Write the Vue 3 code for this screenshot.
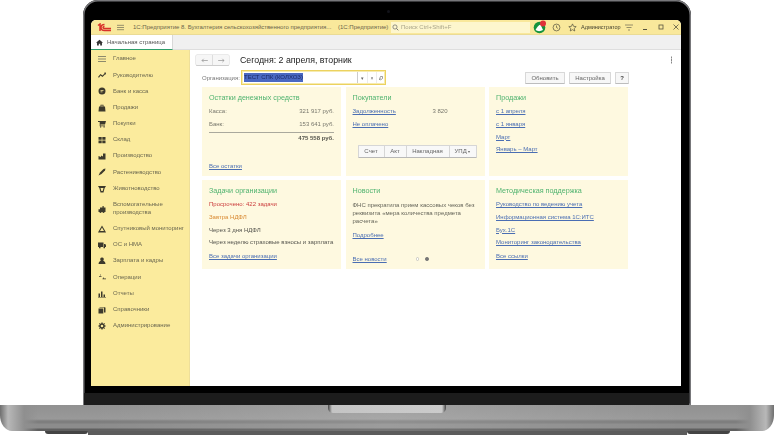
<template>
  <div class="page">
    <div class="lid">
      <div class="cam"></div>
      <div class="screen">
        <header class="titlebar">
          <svg class="logo" viewBox="0 0 14 9">
            <path d="M1 2.500 3 1v7M7.500 1.500C5 1.500 4 3 4 4.500S5 7.500 7.500 7.500H14M7.500 3.500C6.500 3.500 6 4 6 4.600S6.500 5.600 7.500 5.600H14" fill="none" stroke="#d8322a" stroke-width="1.500"/>
          </svg>
          <svg class="menu" viewBox="0 0 8 7"><path d="M0 1h8M0 3.500h8M0 6h8" stroke="#6d6a55" stroke-width=".8"/></svg>
          <span class="apptitle">1С:Предприятие 8. Бухгалтерия сельскохозяйственного предприятия...</span>
          <span class="appmode">(1С:Предприятие)</span>
          <div class="search">
            <svg viewBox="0 0 8 8"><circle cx="3.400" cy="3.400" r="2.400" fill="none" stroke="#666" stroke-width=".8"/><path d="m5.200 5.200 2 2" stroke="#666"/></svg>
            <span>Поиск Ctrl+Shift+F</span>
          </div>
          <div class="notify">
            <svg viewBox="0 0 14 14">
              <circle cx="6.500" cy="7.500" r="5.800" fill="#14933c"/>
              <path d="M2.500 10C4 7 5.500 5.500 7.500 4.500L10 10C7.500 11.500 4.500 11.500 2.500 10z" fill="#fff"/>
              <circle cx="10" cy="3.500" r="3" fill="#e0313a"/>
            </svg>
          </div>
          <svg class="tool" viewBox="0 0 10 10"><circle cx="5" cy="5" r="3.800" fill="none" stroke="#57543f" stroke-width=".8"/><path d="M5 2.800V5l1.600 1" fill="none" stroke="#57543f" stroke-width=".8"/></svg>
          <svg class="tool" viewBox="0 0 10 10"><path d="m5 1 1.200 2.700 2.900.3-2.200 2 .6 2.900L5 7.400 2.500 8.900l.6-2.900-2.200-2 2.900-.3z" fill="none" stroke="#57543f" stroke-width=".8"/></svg>
          <span class="user">Администратор</span>
          <svg class="filter" viewBox="0 0 8 7"><path d="M0 1h8M1.500 3.500h5M3 6h2" stroke="#8a8462" stroke-width=".9"/></svg>
          <svg class="winbtn" viewBox="0 0 8 8"><path d="M2 6.500h4" stroke="#57543f"/></svg>
          <svg class="winbtn" viewBox="0 0 8 8"><rect x="2" y="2" width="4" height="4" fill="none" stroke="#57543f" stroke-width=".8"/></svg>
          <svg class="winbtn" viewBox="0 0 8 8"><path d="m1.500 1.500 5 5m0-5-5 5" stroke="#57543f" stroke-width=".8"/></svg>
        </header>

        <div class="tabs">
          <div class="tab">
            <svg viewBox="0 0 8 8"><path d="M4 .8 0 4.300h1.200V7.500h2V5.300h1.600v2.200h2V4.300H8z" fill="#333"/></svg>
            <span>Начальная страница</span>
          </div>
        </div>

        <div class="body">
          <aside class="sidebar">
            <div v-for="item in menu" :key="item.name" class="menu-item" :class="{ tall: item.tall }">
              <svg viewBox="0 0 8 8"><path :d="item.icon" :fill="item.fill || '#3d3a2c'" fill-rule="evenodd"/></svg>
              <span>{{ item.name }}</span>
            </div>
          </aside>

          <main class="content">
            <div class="headrow">
              <div class="navbtns">
                <button class="nav"><svg viewBox="0 0 8 6"><path d="M8 3H1m2-2L1 3l2 2" fill="none" stroke="#8d8d8d" stroke-width=".8"/></svg></button>
                <button class="nav"><svg viewBox="0 0 8 6"><path d="M0 3h7M5 1l2 2-2 2" fill="none" stroke="#8d8d8d" stroke-width=".8"/></svg></button>
              </div>
              <h1>Сегодня: 2 апреля, вторник</h1>
              <span class="kebab"></span>
            </div>

            <div class="orgrow">
              <label>Организация:</label>
              <div class="orgfield">
                <span class="sel">ТЕСТ СПК (КОЛХОЗ)</span>
                <i class="cell">▾</i><i class="cell">×</i>
                <i class="cell">
                  <svg viewBox="0 0 6 6"><path d="M1 5 2.500 3.500M2.500 1.500h2v2l-2 1.500-1-1z" fill="none" stroke="#777" stroke-width=".7"/></svg>
                </i>
              </div>
              <button class="btn upd">Обновить</button>
              <button class="btn cfg">Настройка</button>
              <button class="btn help">?</button>
            </div>

            <div class="cards">
              <section class="card">
                <h2>Остатки денежных средств</h2>
                <div class="money"><span>Касса:</span><span>321 917 руб.</span></div>
                <div class="money"><span>Банк:</span><span>153 641 руб.</span></div>
                <div class="total">475 558 руб.</div>
                <a class="bottom">Все остатки</a>
              </section>

              <section class="card">
                <h2>Покупатели</h2>
                <div class="debt"><a>Задолженность</a><span>3 820</span></div>
                <a>Не оплачено</a>
                <div class="docs">
                  <button class="w1">Счет</button>
                  <button class="w2">Акт</button>
                  <button class="w3">Накладная</button>
                  <button class="w4">УПД <small>▾</small></button>
                </div>
              </section>

              <section class="card">
                <h2>Продажи</h2>
                <a>с 1 апреля</a>
                <a>с 1 января</a>
                <a>Март</a>
                <a>Январь – Март</a>
              </section>

              <section class="card">
                <h2>Задачи организации</h2>
                <p class="red">Просрочено: 422 задачи</p>
                <p class="orange">Завтра НДФЛ</p>
                <p>Через 3 дня НДФЛ</p>
                <p>Через неделю страховые взносы и зарплата</p>
                <a class="bottom raised">Все задачи организации</a>
              </section>

              <section class="card">
                <h2>Новости</h2>
                <p class="news">ФНС прекратила прием кассовых чеков без реквизита «мера количества предмета расчета»</p>
                <a>Подробнее</a>
                <div class="newsfoot">
                  <a>Все новости</a>
                  <span class="dot"></span>
                  <span class="dot on"></span>
                </div>
              </section>

              <section class="card">
                <h2>Методическая поддержка</h2>
                <a>Руководство по ведению учета</a>
                <a>Информационная система 1С:ИТС</a>
                <a>Бух.1С</a>
                <a>Мониторинг законодательства</a>
                <a class="bottom raised">Все ссылки</a>
              </section>
            </div>
          </main>
        </div>
      </div>
      <div class="chin"></div>
    </div>
    <div class="base"><div class="notch"></div></div>
    <div class="feet"><span></span><i></i><span></span></div>
  </div>
</template>

<script setup>
const menu = [
  { name: 'Главное', fill: '#8d8a6c', icon: 'M0 1h8v1H0zM0 3.500h8v1H0zM0 6h8v1H0z' },
  { name: 'Руководителю', icon: 'M0 6l2.500-3 2 1.500L6.500 2.500 6 1.800 8 1.500 7.800 3.800 7.200 3.200 4.500 6l-2-1.500L1 6.800z' },
  { name: 'Банк и касса', icon: 'M4 .5a3.500 3.500 0 1 0 0 7 3.500 3.500 0 0 0 0-7zM2.500 3h3v.8h-3zM2.500 4.500h2v.8h-2z' },
  { name: 'Продажи', icon: 'M1 2.500h6l.5 5h-7zM2.500 2.500V.8h3v1.700h-.8V1.600H3.300v.9z' },
  { name: 'Покупки', icon: 'M0 1h8l-1 3.500H2.500V5.500H7v.8H1.700V2H0zM2 6.600h1.200v1H2zM5.500 6.600h1.200v1H5.500z' },
  { name: 'Склад', icon: 'M.5 1h3.200v2.800H.5zM4.300 1h3.200v2.800H4.300zM.5 4.400h3.200v2.800H.5zM4.300 4.400h3.200v2.800H4.300z' },
  { name: 'Производство', icon: 'M.5 7.500V4l2.500 1V3.500l2 1V1.500h2.500v6z' },
  { name: 'Растениеводство', icon: 'M.5 7.500 2 4.500 5.500 1 7.500.5 7 2.500 3.500 6z' },
  { name: 'Животноводство', icon: 'M0 1h8L6.500 3.500 5.500 7.500h-3L1.500 3.500zM2.500 3l.8 3h1.400l.8-3z' },
  { name: 'Вспомогательные производства', tall: true, icon: 'M.5 7V4.200h1.500V2.500h2.500V1h1.200v1.500H7.500V7h-1a1 1 0 0 1-2 0h-1a1 1 0 0 1-2 0z' },
  { name: 'Спутниковый мониторинг', icon: 'M4 .5 7.500 6.500 8 7.500H0L.5 6.500zM4 2.500 2 6h4z' },
  { name: 'ОС и НМА', icon: 'M0 1.500h5.500v4.500H0zM6 3h1.300L8 4.300V6H6zM1 6h1.500v1.300H1zM5.500 6H7v1.300H5.500z' },
  { name: 'Зарплата и кадры', icon: 'M4 .5a1.700 1.700 0 0 1 1.200 3l1.800 1.500.5 2H.5l.5-2 1.800-1.500A1.700 1.700 0 0 1 4 .5z' },
  { name: 'Операции', icon: 'M1 3h2.500v.7H1zM2 1.500h.7v1H2zM4.500 5.500H8v.7H4.500zM5 4.500h.7v.9H5z' },
  { name: 'Отчеты', icon: 'M.5 3.500h1.500v3.500H.5zM3 1.500h1.500V7H3zM5.500 4.500H7V7H5.500zM0 7.200h8v.5H0z' },
  { name: 'Справочники', icon: 'M.5 2.500h4.800v5H.5zM6 1.500h1.500v5H6zM1.500 1h5v.5h-5z' },
  { name: 'Администрирование', icon: 'M3.400.4H4.600L4.800 1.400 5.600 1.700 6.500 1.100 6.900 1.500 6.300 2.400 6.600 3.200 7.600 3.400V4.600L6.600 4.800 6.300 5.600 6.900 6.500 6.500 6.900 5.600 6.300 4.800 6.600 4.600 7.600H3.400L3.200 6.600 2.400 6.300 1.500 6.900 1.100 6.500 1.700 5.600 1.400 4.800 .4 4.600V3.400L1.400 3.200 1.700 2.400 1.100 1.500 1.500 1.100 2.400 1.700 3.200 1.400zM4 2.700a1.300 1.300 0 1 0 0 2.600 1.300 1.300 0 0 0 0-2.600z' }
]
</script>

<style>
html, body {
  margin: 0;
  background: #fff;
  overflow: hidden;
}
</style>

<style scoped>
.page {
  width: 774px;
  height: 435px;
  overflow: hidden;
  font-family: "Liberation Sans", Arial, sans-serif;
  color: #55554e;
}

.lid {
  box-sizing: border-box;
  width: 608px;
  height: 405px;
  margin-left: 83px;
  padding: 20px 10px 0 8px;
  background: #000;
  border-radius: 15px 15px 0 0;
  box-shadow: inset 0 0 0 1.500px #77777a;
  position: relative;
}

.cam {
  position: absolute;
  top: 10px;
  left: 304px;
  width: 3px;
  height: 3px;
  border-radius: 50%;
  background: #12131a;
}

.screen {
  height: 366px;
  display: flex;
  flex-direction: column;
  background: #fff;
  border-radius: 5px 5px 0 0;
  overflow: hidden;
  filter: blur(.4px);
}

.chin {
  height: 12px;
  margin: 7px -8px 0 -7px;
  background: #1c1c1c;
}

.titlebar {
  flex: none;
  height: 14px;
  display: flex;
  align-items: center;
  background: #f9e89b;
  border-bottom: 1px solid #eadb95;
  font-size: 6px;
  color: #6a664c;
}

.logo {
  width: 14px;
  height: 9px;
  margin-left: 6px;
}

.menu {
  width: 7px;
  height: 7px;
  margin-left: 6px;
}

.apptitle {
  margin-left: 9px;
  width: 198px;
  white-space: nowrap;
}

.appmode {
  margin-left: 7px;
  width: 50px;
  white-space: nowrap;
}

.search {
  box-sizing: border-box;
  display: flex;
  align-items: center;
  gap: 2px;
  width: 139px;
  height: 11px;
  margin-left: 3px;
  padding-left: 1px;
  background: #fdf6cd;
  color: #aaa58a;
  white-space: nowrap;
}

.search svg {
  width: 7px;
  height: 7px;
}

.notify svg {
  display: block;
  width: 14px;
  height: 14px;
  margin-left: 3px;
}

.tool {
  width: 9px;
  height: 9px;
  margin-left: 5px;
}

.tool + .tool {
  margin-left: 7px;
}

.user {
  margin-left: 4px;
  width: 39px;
  white-space: nowrap;
  font-size: 5.500px;
  color: #44422f;
}

.filter {
  width: 8px;
  height: 7px;
  margin-left: 5px;
}

.winbtn {
  width: 8px;
  height: 8px;
  margin-left: 8px;
}

.winbtn:last-child {
  margin-left: 7px;
}

.tabs {
  flex: none;
  height: 15px;
  background: #f0f0f0;
  border-bottom: 1px solid #dedede;
  box-sizing: border-box;
}

.tab {
  box-sizing: border-box;
  display: flex;
  align-items: center;
  gap: 4px;
  width: 82px;
  height: 15px;
  padding-left: 5px;
  background: #fff;
  border-right: 1px solid #d8d8d8;
  border-bottom: 1px solid #2f9e6a;
  font-size: 6px;
  color: #555;
  white-space: nowrap;
}

.tab svg {
  width: 7px;
  height: 7px;
}

.body {
  flex: 1;
  display: flex;
  min-height: 0;
}

.sidebar {
  box-sizing: border-box;
  flex: none;
  width: 99px;
  padding-top: 1px;
  background: #fbeb9d;
  border-right: 1px solid #eedf9a;
}

.menu-item {
  display: flex;
  align-items: center;
  height: 16.200px;
  padding-left: 7px;
  font-size: 6px;
  line-height: 7.500px;
  color: #6b6850;
}

.menu-item.tall {
  height: 24px;
}

.menu-item svg {
  flex: none;
  width: 8px;
  height: 8px;
  margin-right: 7px;
}

.content {
  flex: 1;
  min-width: 0;
  padding: 5px 0 0 6px;
}

.headrow {
  display: flex;
  align-items: center;
  height: 10px;
}

.navbtns {
  display: flex;
  flex: none;
  width: 33px;
  height: 10px;
  border-radius: 1px;
  box-shadow: 0 0 0 .5px #d5d5d5, 0 1px 0 #c4c4c4;
  background: #f6f6f6;
}

.nav {
  flex: 1;
  border: 0;
  padding: 0;
  background: none;
  display: flex;
  align-items: center;
  justify-content: center;
}

.nav + .nav {
  border-left: 1px solid #ddd;
}

.nav svg {
  width: 7px;
  height: 5px;
}

h1 {
  margin: 0 0 0 11px;
  font-size: 8.800px;
  font-weight: 400;
  color: #222;
  white-space: nowrap;
}

.kebab {
  width: 1.500px;
  height: 1.500px;
  margin-left: auto;
  margin-right: 9px;
  background: #888;
  box-shadow: 0 -2.500px 0 #888, 0 2.500px 0 #888;
}

.orgrow {
  display: flex;
  align-items: center;
  height: 15px;
  margin-top: 5px;
  margin-left: 6px;
  font-size: 6px;
  color: #777;
}

.orgrow label {
  width: 39px;
  white-space: nowrap;
}

.orgfield {
  box-sizing: border-box;
  display: flex;
  align-items: center;
  width: 145px;
  height: 15px;
  border: 1px solid #ecd25f;
  background: #fff;
  box-shadow: inset 0 0 0 1px #f6ebb0;
}

.sel {
  margin-left: 2px;
  max-width: 59px;
  height: 9px;
  line-height: 9px;
  background: #4a68c2;
  color: #1c2a66;
  white-space: nowrap;
}

.cell {
  flex: none;
  display: flex;
  align-items: center;
  justify-content: center;
  width: 9px;
  height: 11px;
  border-left: 1px solid #ececec;
  box-sizing: border-box;
  font-style: normal;
  font-size: 5px;
  color: #666;
}

.cell svg {
  width: 6px;
  height: 6px;
}

.cell:first-of-type {
  margin-left: auto;
  border-left-color: #ccc;
  width: 10px;
}

.btn {
  height: 12px;
  margin-left: 4px;
  padding: 0;
  border: 1px solid #d8d8d8;
  border-bottom-color: #bdbdbd;
  border-radius: 1px;
  background: #f7f7f7;
  font: 6px "Liberation Sans", Arial, sans-serif;
  color: #666;
}

.upd {
  width: 40px;
  margin-left: 139px;
}

.cfg {
  width: 42px;
}

.help {
  width: 14px;
  font-weight: 700;
  color: #444;
}

.cards {
  display: grid;
  grid-template-columns: repeat(3, 139px);
  grid-auto-rows: 89px;
  gap: 4px 4.500px;
  margin-top: 2px;
  margin-left: 6px;
}

.card {
  box-sizing: border-box;
  display: flex;
  flex-direction: column;
  align-items: flex-start;
  gap: 6.400px;
  padding: 6px 7px 7px;
  background: #fef9e0;
  font-size: 6px;
  line-height: 6.200px;
}

h2 {
  margin: 1px 0 0;
  font-size: 7.200px;
  line-height: 8px;
  font-weight: 400;
  color: #4fb36f;
  white-space: nowrap;
}

a {
  color: #4a6eb3;
  text-decoration: underline;
  white-space: nowrap;
}

p {
  margin: 0;
  white-space: nowrap;
}

.red {
  color: #cb3d3d;
}

.orange {
  color: #d98a32;
}

.bottom {
  margin-top: auto;
}

.raised {
  margin-bottom: 3px;
}

.money {
  display: flex;
  justify-content: space-between;
  width: 100%;
  color: #77776c;
}

.total {
  width: 100%;
  margin-top: -2px;
  padding-top: 2px;
  border-top: 1px solid #aaa99d;
  text-align: right;
  font-weight: 700;
  color: #55554c;
}

.debt {
  display: flex;
  color: #77776c;
}

.debt a {
  width: 80px;
}

.docs {
  display: flex;
  height: 11px;
  margin-top: 11px;
  margin-left: 5px;
  border: 1px solid #d6d6d6;
  border-bottom-color: #b8b8b8;
  border-radius: 1px;
  background: #f8f8f8;
}

.docs button {
  padding: 0;
  border: 0;
  border-left: 1px solid #d6d6d6;
  background: none;
  font: 6px "Liberation Sans", Arial, sans-serif;
  color: #666;
}

.docs .w1 {
  width: 25px;
  border-left: 0;
}

.docs .w2 {
  width: 22px;
}

.docs .w3 {
  width: 43px;
}

.docs .w4 {
  width: 27px;
}

.docs small {
  font-size: 4px;
}

.news {
  width: 126px;
  line-height: 8px;
  white-space: normal;
  color: #66665a;
}

.newsfoot {
  display: flex;
  align-items: center;
  width: 100%;
  margin-top: auto;
}

.dot {
  width: 3.500px;
  height: 3.500px;
  border-radius: 50%;
  box-sizing: border-box;
  border: 1px solid #c8c8c0;
  background: #fff;
  margin-left: 29px;
}

.dot.on {
  margin-left: 6px;
  border-color: #777;
  background: #777;
}

.base {
  display: flex;
  justify-content: center;
  height: 26px;
  border-radius: 0 0 12px 12px / 0 0 16px 16px;
  background:
    linear-gradient(90deg, #6f6f6f 0, #b8b8b8 8px, #8f8f8f 24px, transparent 38px, transparent 736px, #8f8f8f 750px, #b8b8b8 766px, #6f6f6f 774px),
    linear-gradient(90deg, transparent 90px, rgba(255, 255, 255, .14) 387px, transparent 684px),
    linear-gradient(180deg, #919191 0, #999 14px, #7e7e7e 16px, #7e7e7e 18px, #8c8c8c 19px, #8c8c8c 23px, #5f5f5f 24px);
}

.notch {
  width: 118px;
  height: 8px;
  border-radius: 0 0 5px 5px;
  background: linear-gradient(90deg, #444 0, #c4c4c4 4px, #cbcbcb 114px, #444 118px);
}

.feet {
  display: flex;
  height: 4px;
  padding: 0 44px 0 45px;
}

.feet span {
  width: 43px;
  height: 3px;
  background: #444;
  border-radius: 0 0 8px 8px;
}

.feet i {
  flex: 1;
  background: #5c5c5c;
}
</style>
